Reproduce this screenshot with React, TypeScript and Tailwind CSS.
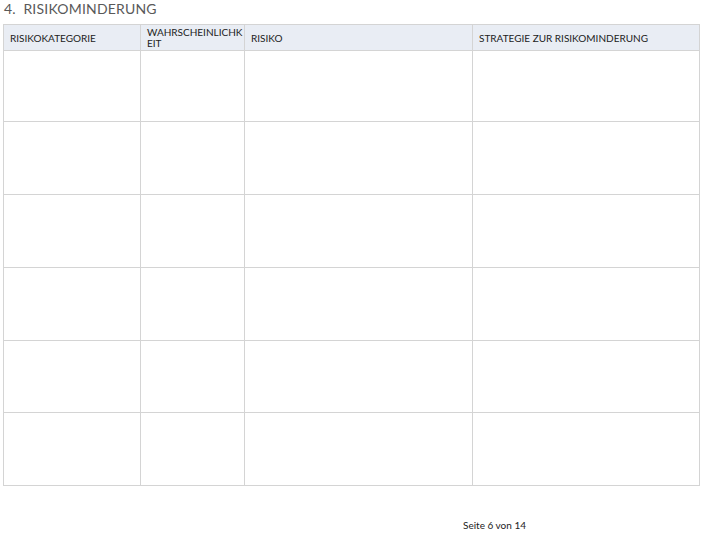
export default function App() {
  const rows = [71, 73, 73, 73, 72, 73];
  return (
    <div className="w-[701px] h-[533px] bg-white relative" style={{ fontFamily: "Lato, 'DejaVu Sans', sans-serif" }}>
      <div className="pl-[4px] pt-[0px] h-[24px] text-[14px] leading-[18px] text-[#595959] tracking-[0.2px]">4.&nbsp; RISIKOMINDERUNG</div>
      <div className="ml-[3px] w-[697px] border border-[#d4d4d4]">
        <div className="grid grid-cols-[137px_104px_228px_1fr] h-[25px] bg-[#e9edf4] text-[10px] text-[#222] leading-[11px]">
          <div className="border-r border-[#d4d4d4] px-[6px] flex items-center pt-[2px]">RISIKOKATEGORIE</div>
          <div className="border-r border-[#d4d4d4] px-[6px] pt-[2px]">WAHRSCHEINLICHK<br />EIT</div>
          <div className="border-r border-[#d4d4d4] px-[6px] flex items-center pt-[2px]">RISIKO</div>
          <div className="px-[6px] flex items-center pt-[2px]">STRATEGIE ZUR RISIKOMINDERUNG</div>
        </div>
        {rows.map((h, i) => (
          <div key={i} className="grid grid-cols-[137px_104px_228px_1fr] border-t border-[#d4d4d4]" style={{ height: h }}>
            <div className="border-r border-[#d4d4d4]" />
            <div className="border-r border-[#d4d4d4]" />
            <div className="border-r border-[#d4d4d4]" />
            <div />
          </div>
        ))}
      </div>
      <div className="absolute left-[463px] top-[518px] text-[10px] text-[#222]">Seite 6 von 14</div>
    </div>
  );
}
